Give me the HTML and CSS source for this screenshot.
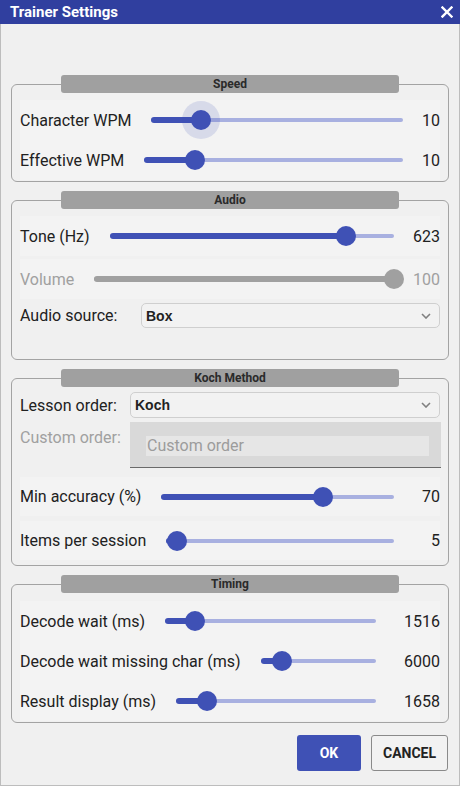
FILE: index.html
```html
<!DOCTYPE html>
<html lang="en">
<head>
    <meta charset="UTF-8">
    <meta name="viewport" content="width=device-width, initial-scale=1.0">
    <title>Trainer Settings</title>
    <link rel="stylesheet" href="styles.css">
</head>
<body>
    <div class="window">
        <div class="titlebar">
            <span class="title">Trainer Settings</span>
            <svg class="close" width="12" height="12" viewBox="0 0 12 12">
                <path d="M1.5 1.5 L10.5 10.5 M10.5 1.5 L1.5 10.5" stroke="#fff" stroke-width="2.4" stroke-linecap="square"/>
            </svg>
        </div>

        <div class="content">
            <!-- Speed -->
            <div class="group group-speed">
                <div class="group-title">Speed</div>
                <div class="row">
                    <span class="label">Character WPM</span>
                    <div class="slider">
                        <div class="track">
                            <div class="fill" style="width:19.5%"></div>
                            <div class="thumb focused" style="left:19.5%"></div>
                        </div>
                    </div>
                    <span class="value">10</span>
                </div>
                <div class="row">
                    <span class="label">Effective WPM</span>
                    <div class="slider">
                        <div class="track">
                            <div class="fill" style="width:19.5%"></div>
                            <div class="thumb" style="left:19.5%"></div>
                        </div>
                    </div>
                    <span class="value">10</span>
                </div>
            </div>

            <!-- Audio -->
            <div class="group group-audio">
                <div class="group-title">Audio</div>
                <div class="row">
                    <span class="label">Tone (Hz)</span>
                    <div class="slider">
                        <div class="track">
                            <div class="fill" style="width:83%"></div>
                            <div class="thumb" style="left:83%"></div>
                        </div>
                    </div>
                    <span class="value">623</span>
                </div>
                <div class="row disabled">
                    <span class="label">Volume</span>
                    <div class="slider">
                        <div class="track">
                            <div class="fill" style="width:100%"></div>
                            <div class="thumb" style="left:100%"></div>
                        </div>
                    </div>
                    <span class="value">100</span>
                </div>
                <div class="combo-row audio-source">
                    <span class="label">Audio source:</span>
                    <div class="combo">
                        <span>Box</span>
                        <svg width="10" height="6" viewBox="0 0 10 6"><path d="M1 1 L5 5 L9 1" fill="none" stroke="#808080" stroke-width="1.6"/></svg>
                    </div>
                </div>
            </div>

            <!-- Koch Method -->
            <div class="group group-koch">
                <div class="group-title">Koch Method</div>
                <div class="combo-row lesson-order">
                    <span class="label">Lesson order:</span>
                    <div class="combo">
                        <span>Koch</span>
                        <svg width="10" height="6" viewBox="0 0 10 6"><path d="M1 1 L5 5 L9 1" fill="none" stroke="#808080" stroke-width="1.6"/></svg>
                    </div>
                </div>
                <div class="custom-row">
                    <span class="label">Custom order:</span>
                    <div class="custom-box">
                        <div class="custom-input">Custom order</div>
                    </div>
                </div>
                <div class="row accuracy">
                    <span class="label">Min accuracy (%)</span>
                    <div class="slider">
                        <div class="track">
                            <div class="fill" style="width:69.6%"></div>
                            <div class="thumb" style="left:69.6%"></div>
                        </div>
                    </div>
                    <span class="value">70</span>
                </div>
                <div class="row items">
                    <span class="label">Items per session</span>
                    <div class="slider">
                        <div class="track">
                            <div class="fill" style="width:4.8%"></div>
                            <div class="thumb" style="left:4.8%"></div>
                        </div>
                    </div>
                    <span class="value">5</span>
                </div>
            </div>

            <!-- Timing -->
            <div class="group group-timing">
                <div class="group-title">Timing</div>
                <div class="row">
                    <span class="label">Decode wait (ms)</span>
                    <div class="slider">
                        <div class="track">
                            <div class="fill" style="width:14.3%"></div>
                            <div class="thumb" style="left:14.3%"></div>
                        </div>
                    </div>
                    <span class="value">1516</span>
                </div>
                <div class="row">
                    <span class="label">Decode wait missing char (ms)</span>
                    <div class="slider">
                        <div class="track">
                            <div class="fill" style="width:19%"></div>
                            <div class="thumb" style="left:19%"></div>
                        </div>
                    </div>
                    <span class="value">6000</span>
                </div>
                <div class="row">
                    <span class="label">Result display (ms)</span>
                    <div class="slider">
                        <div class="track">
                            <div class="fill" style="width:15.7%"></div>
                            <div class="thumb" style="left:15.7%"></div>
                        </div>
                    </div>
                    <span class="value">1658</span>
                </div>
            </div>

            <div class="buttons">
                <button class="btn btn-ok">OK</button>
                <button class="btn btn-cancel">CANCEL</button>
            </div>
        </div>
    </div>
</body>
</html>
```

FILE: styles.css
```css
* {
    box-sizing: border-box;
}
body {
    margin: 0;
    background: #f0f0f0;
    font-family: Roboto, "Liberation Sans", sans-serif;
    color: #212121;
}
.window {
    width: 460px;
    height: 786px;
    border: 1px solid #bdbdbd;
    border-top: none;
    background: #f0f0f0;
}
.titlebar {
    height: 24px;
    margin: 0 -1px;
    background: #303f9f;
    color: #fff;
    display: flex;
    align-items: center;
    justify-content: space-between;
    padding: 0 7px 0 10px;
}
.title {
    font-size: 15px;
    font-weight: bold;
}
.content {
    padding: 60px 10px 0 10px;
}
.group {
    border: 1px solid #a3a3a3;
    border-radius: 6px;
    padding: 0 8px;
    margin-top: 18px;
}
.group:first-child {
    margin-top: 0;
}
.group-title {
    height: 18px;
    margin: -10px 41px 0 41px;
    background: #a0a0a0;
    border-radius: 3px;
    font-size: 12px;
    font-weight: bold;
    color: #2a2a2a;
    text-align: center;
    line-height: 18px;
}
.row {
    display: flex;
    align-items: center;
    height: 40px;
    background: #f3f3f3;
    font-size: 16px;
}
.label {
    font-size: 16px;
    white-space: nowrap;
}
.slider {
    flex: 1;
    margin-left: 20px;
}
.track {
    position: relative;
    height: 4px;
    border-radius: 2px;
    background: #a8b0e0;
}
.fill {
    position: absolute;
    left: 0;
    top: -1px;
    height: 6px;
    border-radius: 3px;
    background: #3f51b5;
}
.thumb {
    position: absolute;
    top: 2px;
    width: 20px;
    height: 20px;
    margin: -10px 0 0 -10px;
    border-radius: 50%;
    background: #3f51b5;
}
.thumb.focused {
    box-shadow: 0 0 0 9px rgba(63, 81, 181, 0.15);
}
.value {
    text-align: right;
    font-size: 16px;
}
.group-speed .value {
    width: 37px;
}
.group-audio .value,
.group-koch .value {
    width: 46px;
}
.group-timing .value {
    width: 64px;
}
.disabled {
    color: #a0a0a0;
}
.disabled .track,
.disabled .fill,
.disabled .thumb {
    background: #a0a0a0;
}

/* speed group */
.group-speed .group-title + .row {
    margin-top: 7px;
}
.group-speed {
    padding-bottom: 1px;
}

/* audio group */
.group-audio .row {
    margin-top: 3px;
}
.group-audio .group-title + .row {
    margin-top: 7px;
}
.group-audio {
    padding-bottom: 31px;
}

/* combos */
.combo-row {
    display: flex;
    align-items: center;
}
.audio-source {
    margin-top: 4px;
}
.audio-source .label {
    width: 121px;
}
.lesson-order {
    margin-top: 5px;
}
.lesson-order .label {
    width: 110px;
}
.combo {
    flex: 1;
    height: 26px;
    border: 1px solid #cfcfcf;
    border-radius: 5px;
    background: #f2f2f2;
    display: flex;
    align-items: center;
    justify-content: space-between;
    padding: 0 8px 0 4px;
    font-family: "Liberation Sans", Arial, sans-serif;
    font-size: 14px;
    font-weight: bold;
    color: #222;
}
.audio-source .combo {
    height: 25px;
}

/* koch group */
.custom-row {
    display: flex;
    margin-top: 4px;
}
.custom-row .label {
    width: 110px;
    margin-top: 6px;
    color: #a0a0a0;
}
.custom-box {
    flex: 1;
    height: 46px;
    margin-right: -1px;
    background: #d9d9d9;
    border-bottom: 1px solid #6a6a6a;
    padding: 14px 12px 0 16px;
}
.custom-input {
    height: 20px;
    background: #e6e6e6;
    color: #9c9c9c;
    font-size: 16px;
    line-height: 20px;
    padding-left: 1px;
}
.group-koch .accuracy {
    margin-top: 9px;
    height: 39px;
}
.group-koch .items {
    margin-top: 5px;
    height: 39px;
}
.group-koch {
    padding-bottom: 5px;
}

/* timing group */
.group-timing .group-title + .row {
    margin-top: 8px;
}
.group-timing {
    padding-bottom: 1px;
}

/* buttons */
.buttons {
    display: flex;
    justify-content: flex-end;
    gap: 10px;
    margin-top: 12px;
    padding-right: 1px;
}
.btn {
    height: 36px;
    border-radius: 3px;
    font-family: Roboto, "Liberation Sans", sans-serif;
    font-size: 14px;
    font-weight: bold;
}
.btn-ok {
    width: 64px;
    border: none;
    background: #3f51b5;
    color: #fff;
}
.btn-cancel {
    width: 77px;
    border: 1px solid #8a8a8a;
    background: #f2f2f2;
    color: #222;
}
```
